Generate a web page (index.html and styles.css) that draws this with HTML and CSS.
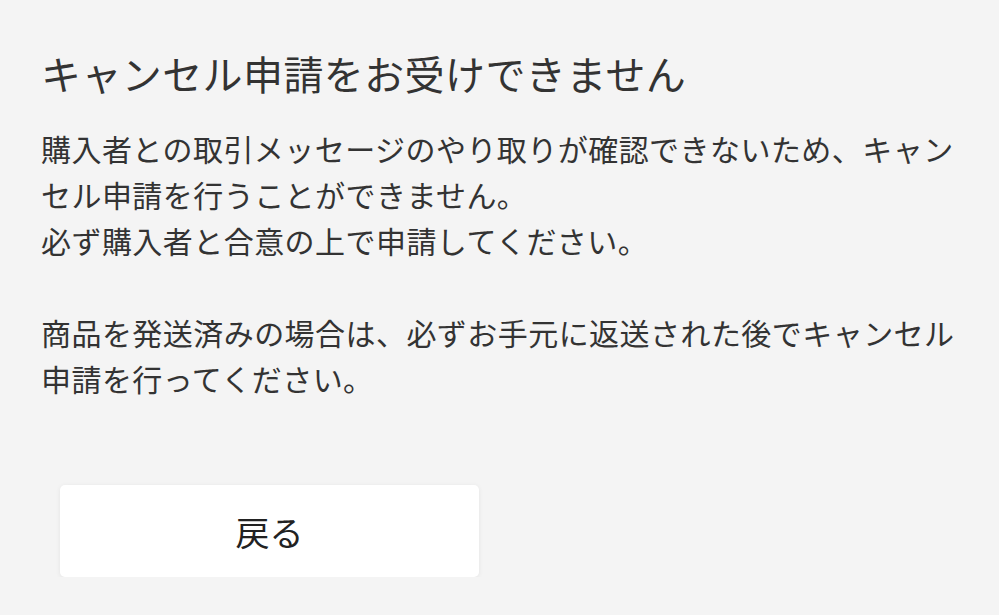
FILE: index.html
```html
<!DOCTYPE html>
<html lang="ja">
<head>
<meta charset="utf-8">
<title>キャンセル申請をお受けできません</title>
<link rel="stylesheet" href="styles.css">
</head>
<body>
<main class="page">
  <h1 class="title">キャンセル申請をお受けできません</h1>
  <p class="message">購入者との取引メッセージのやり取りが確認できないため、キャンセル申請を行うことができません。<br>必ず購入者と合意の上で申請してください。<br><br>商品を発送済みの場合は、必ずお手元に返送された後でキャンセル申請を行ってください。</p>
  <div class="actions">
    <button class="back-button" type="button">戻る</button>
  </div>
</main>
</body>
</html>
```

FILE: styles.css
```css
html, body {
  margin: 0;
  padding: 0;
  background: #f4f4f4;
}

body {
  font-family: "Noto Sans CJK JP", "Noto Sans", sans-serif;
  color: #333333;
}

.page {
  padding: 43px 38px 0 41px;
}

.title {
  margin: 0;
  font-size: 40px;
  line-height: 60px;
  font-weight: 400;
  letter-spacing: 0.4px;
  color: #333333;
}

.message {
  margin: 22px 0 0 0;
  font-size: 30px;
  line-height: 46px;
  font-weight: 400;
  letter-spacing: 0.45px;
}

.actions {
  margin-top: 84px;
  padding-left: 19px;
}

.back-button {
  display: block;
  width: 419px;
  height: 92px;
  border: none;
  border-radius: 5px;
  background: #ffffff;
  box-shadow: 0 1px 5px rgba(0, 0, 0, 0.07);
  font-family: "Noto Sans CJK JP", "Noto Sans", sans-serif;
  font-size: 34px;
  color: #222222;
  padding: 0;
  cursor: pointer;
}
```
